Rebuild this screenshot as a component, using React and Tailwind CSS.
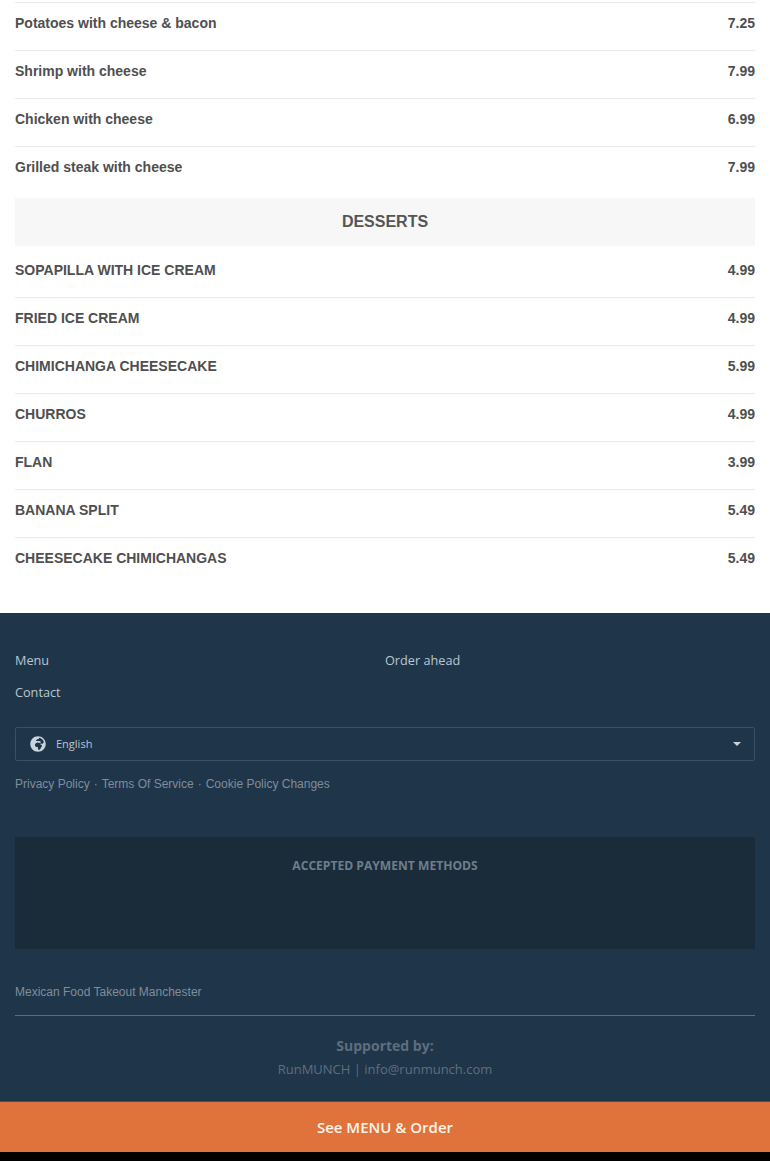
import { FaGlobeAfrica } from "react-icons/fa";

const mains = [
  ["Potatoes with cheese & bacon", "7.25"],
  ["Shrimp with cheese", "7.99"],
  ["Chicken with cheese", "6.99"],
  ["Grilled steak with cheese", "7.99"],
];

const desserts = [
  ["SOPAPILLA WITH ICE CREAM", "4.99"],
  ["FRIED ICE CREAM", "4.99"],
  ["CHIMICHANGA CHEESECAKE", "5.99"],
  ["CHURROS", "4.99"],
  ["FLAN", "3.99"],
  ["BANANA SPLIT", "5.49"],
  ["CHEESECAKE CHIMICHANGAS", "5.49"],
];

function Row({ name, price, className }) {
  return (
    <div className={"flex justify-between text-[14px] leading-[20px] font-bold text-[#4f4f4f] " + className}>
      <span>{name}</span>
      <span>{price}</span>
    </div>
  );
}

export default function App() {
  return (
    <div className="h-[1161px] overflow-hidden bg-white font-['Open_Sans',sans-serif]">
      <div className="px-[15px] pt-[2px] font-['Liberation_Sans',sans-serif]">
        {mains.map(([name, price], i) => (
          <Row
            key={name}
            name={name}
            price={price}
            className={"border-t border-[#ebebeb] pt-[10px] " + (i === 3 ? "pb-[21px]" : "pb-[17px]")}
          />
        ))}
        <div className="h-[48px] flex items-center justify-center bg-[#f7f7f7] text-[16px] font-bold text-[#555555]">
          DESSERTS
        </div>
        {desserts.map(([name, price], i) => (
          <Row
            key={name}
            name={name}
            price={price}
            className={
              i === 0
                ? "pt-[14px] pb-[17px]"
                : "border-t border-[#ebebeb] pt-[10px] " + (i === 6 ? "pb-[45px]" : "pb-[17px]")
            }
          />
        ))}
      </div>

      <footer className="h-[488px] bg-[#1f354a] px-[15px] pt-[31px]">
        <div className="grid grid-cols-2 text-[12.7px] leading-[32px] text-[#bcc6cf]">
          <a>Menu</a>
          <a>Order ahead</a>
          <a>Contact</a>
        </div>

        <div className="mt-[19px] h-[34px] flex items-center rounded-[2px] border border-[#3b5063] pl-[14px] pr-[13px] text-[11px] text-[#bcc6cf]">
          <FaGlobeAfrica className="w-[16px] h-[16px] text-[#c9d3dc]" />
          <span className="ml-[10px]">English</span>
          <span className="ml-auto border-x-[4px] border-t-[4px] border-x-transparent border-t-[#c9d3dc]" />
        </div>

        <div className="mt-[15px] flex items-center font-['Liberation_Sans',sans-serif] text-[12px] leading-[16px] text-[#7f8d9b]">
          <a>Privacy Policy</a>
          <span className="mx-[4px]">·</span>
          <a>Terms Of Service</a>
          <span className="mx-[4px]">·</span>
          <a>Cookie Policy Changes</a>
        </div>

        <div className="mt-[45px] h-[112px] bg-[#1a2b3a] pt-[21px] text-center text-[12.1px] leading-[16px] font-bold text-[#6f7e8c]">
          ACCEPTED PAYMENT METHODS
        </div>

        <div className="mt-[35px] border-b border-[#5d6d7b] pb-[15px] font-['Liberation_Sans',sans-serif] text-[12px] leading-[16px] text-[#7f8d9b]">
          Mexican Food Takeout Manchester
        </div>

        <div className="mt-[20px] text-center text-[14px] leading-[20px] font-bold text-[#5f6e7d]">
          Supported by:
        </div>
        <div className="mt-[3px] text-center text-[13px] leading-[20px] text-[#5f6e7d]">
          RunMUNCH | info@runmunch.com
        </div>
      </footer>

      <div className="h-[51px] flex items-center justify-center border-t border-[#5a4a45] bg-[#e0733c] text-[15px] font-semibold text-[#fff4ea]">
        See MENU &amp; Order
      </div>
      <div className="h-[9px] bg-black" />
    </div>
  );
}
